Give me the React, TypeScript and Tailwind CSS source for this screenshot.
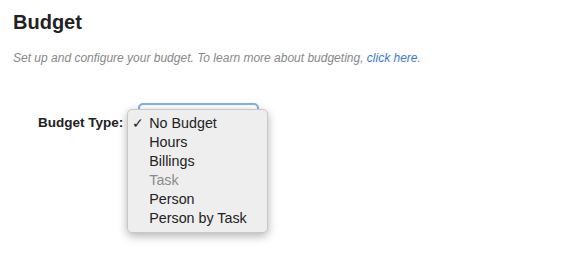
export default function App() {
  const options = [
    { label: "No Budget", checked: true },
    { label: "Hours" },
    { label: "Billings" },
    { label: "Task", disabled: true },
    { label: "Person" },
    { label: "Person by Task" },
  ];

  return (
    <div className="h-[265px] w-[574px] bg-white font-['Liberation_Sans',Arial,sans-serif] text-[#333]">
      <div className="px-[13px] pt-[10px]">
        <h1 className="text-[20px] font-bold leading-[24px] text-[#222]">Budget</h1>
        <p className="mt-[17px] text-[12px] italic leading-[14px] text-[#888]">
          Set up and configure your budget. To learn more about budgeting,{" "}
          <a className="text-[#3a7bc8]">click here</a>.
        </p>

        {/* Budget type row */}
        <div className="mt-[38px] flex items-start">
          <label className="ml-[25px] mt-[12px] text-[13.5px] font-bold leading-[16px] text-[#222]">
            Budget Type:
          </label>
          <div className="relative ml-[15px] h-[24px] w-[121px] rounded-[5px] border-2 border-[#7fb0ea]">
            <ul className="absolute left-[-13px] top-[4px] w-[141px] rounded-[5px] border border-[#c8c8c8] bg-[#eeeeee] py-[4px] shadow-[0_3px_10px_rgba(0,0,0,0.3)]">
              {options.map((o) => (
                <li
                  key={o.label}
                  className={
                    "flex h-[19px] items-center text-[14.3px] leading-[19px] " +
                    (o.disabled ? "text-[#8a8a8a]" : "text-[#222]")
                  }
                >
                  <span className="w-[21px] pl-[4px] text-[14px]">{o.checked ? "✓" : ""}</span>
                  {o.label}
                </li>
              ))}
            </ul>
          </div>
        </div>
      </div>
    </div>
  );
}
